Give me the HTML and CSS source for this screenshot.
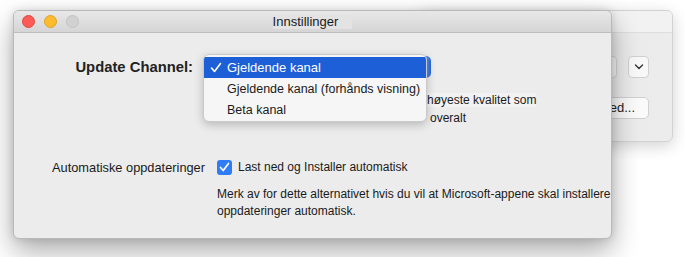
FILE: index.html
```html
<!DOCTYPE html>
<html lang="nb">

<head>
    <meta charset="UTF-8" />
    <meta name="viewport" content="width=device-width, initial-scale=1.0" />
    <title>Innstillinger</title>
    <link rel="stylesheet" href="styles.css">
</head>

<body>
    <div class="desktop">
        <!-- Window behind -->
        <div class="window back">
            <div class="back-title"></div>
            <div class="back-body">
                <div class="back-row">
                    <div class="field"></div>
                    <div class="stepper">
                        <svg width="10" height="6" viewBox="0 0 10 6">
                            <polyline points="1.5,1 5,4.5 8.5,1" fill="none" stroke="#333" stroke-width="1.4" stroke-linecap="round" stroke-linejoin="round" />
                        </svg>
                    </div>
                </div>
                <div class="back-row">
                    <div class="btn">Advanced...</div>
                </div>
            </div>
        </div>

        <!-- Settings window -->
        <div class="window front">
            <div class="titlebar">
                <div class="lights">
                    <span class="light red"></span>
                    <span class="light yellow"></span>
                    <span class="light gray"></span>
                </div>
                <div class="title"><span>Innstillinger</span></div>
                <div></div>
            </div>

            <div class="content">
                <div class="channel-row">
                    <div class="channel-label">Update Channel:</div>
                    <div class="popup">
                        <div class="menu">
                            <div class="item selected">
                                <svg class="check" width="12" height="11" viewBox="0 0 12 11">
                                    <polyline points="1.5,6 4.5,9.5 10.5,1.5" fill="none" stroke="#fff" stroke-width="1.6" stroke-linecap="round" stroke-linejoin="round" />
                                </svg>
                                Gjeldende kanal
                            </div>
                            <div class="item">Gjeldende kanal (forhånds visning)</div>
                            <div class="item">Beta kanal</div>
                        </div>
                    </div>
                </div>

                <div class="channel-note">
                    <p><span class="mark">høyeste kvalitet som</span></p>
                    <p class="shift">overalt</p>
                </div>

                <div class="auto-row">
                    <div class="auto-label">Automatiske oppdateringer</div>
                    <div class="checkbox">
                        <svg width="11" height="10" viewBox="0 0 11 10">
                            <polyline points="1.5,5.5 4.2,8.5 9.5,1.5" fill="none" stroke="#fff" stroke-width="1.7" stroke-linecap="round" stroke-linejoin="round" />
                        </svg>
                    </div>
                    <div class="auto-text">Last ned og Installer automatisk</div>
                </div>

                <p class="auto-note">Merk av for dette alternativet hvis du vil at Microsoft-appene skal installere<br>oppdateringer automatisk.</p>
            </div>
        </div>
    </div>
</body>

</html>
```

FILE: styles.css
```css
/* General Reset */
* {
    margin: 0;
    padding: 0;
    box-sizing: border-box;
}

body {
    font-family: "Liberation Sans", Arial, sans-serif;
    background: #fff;
    color: #1a1a1a;
}

.desktop {
    position: relative;
    width: 685px;
    height: 257px;
    overflow: hidden;
    background: #fff;
}

.window {
    position: absolute;
    border-radius: 6px;
    overflow: hidden;
}

/* Back window */
.back {
    left: 420px;
    top: 10px;
    width: 253px;
    height: 132px;
    background: linear-gradient(90deg, #d9d9d9, #e9e9e9 40%, #ececec);
    border: 1px solid #d2d2d2;
    box-shadow: 0 4px 16px rgba(0, 0, 0, 0.18);
}

.back-title {
    height: 22px;
    background: #f2f2f2;
    border-bottom: 1px solid #dedede;
}

.back-body {
    display: flex;
    flex-direction: column;
    align-items: flex-end;
    gap: 19px;
    padding: 23px 23px 0 0;
}

.back-row {
    display: flex;
    align-items: center;
    gap: 11px;
}

.field {
    width: 120px;
    height: 22px;
    background: #f7f7f7;
    border: 1px solid #d4d4d4;
    border-radius: 4px;
}

.stepper {
    width: 21px;
    height: 22px;
    background: #f8f8f8;
    border: 1px solid #d0d0d0;
    border-radius: 4px;
    display: flex;
    align-items: center;
    justify-content: center;
}

.btn {
    height: 22px;
    padding: 0 13px 0 14px;
    background: #fafafa;
    border: 1px solid #d0d0d0;
    border-radius: 5px;
    font-size: 13px;
    line-height: 20px;
    color: #222;
}

/* Front window */
.front {
    left: 13px;
    top: 10px;
    width: 599px;
    height: 229px;
    background: #ececec;
    border: 1px solid #b9b9b9;
    box-shadow: 0 12px 28px rgba(0, 0, 0, 0.33), 0 0 8px rgba(0, 0, 0, 0.12);
}

.titlebar {
    display: grid;
    grid-template-columns: 1fr auto 1fr;
    align-items: center;
    height: 22px;
    background: linear-gradient(#e8e8e8, #d5d5d5);
    border-bottom: 1px solid #bdbdbd;
}

.lights {
    display: flex;
    gap: 9px;
    padding-left: 8px;
}

.light {
    width: 13px;
    height: 13px;
    border-radius: 50%;
}

.red {
    background: #fd5b57;
    border: 0.5px solid #e2463f;
}

.yellow {
    background: #fdbc2e;
    border: 0.5px solid #e1a125;
}

.gray {
    background: #d1d1d1;
    border: 0.5px solid #c2c2c2;
}

.title span {
    display: block;
    font-size: 13px;
    line-height: 14px;
    padding-right: 14px;
    background: #e3e3e3;
    color: #1a1a1a;
}

.content {
    padding-top: 23px;
    white-space: nowrap;
}

.channel-row {
    display: flex;
    align-items: center;
    gap: 10px;
    height: 22px;
}

.channel-label {
    width: 179px;
    text-align: right;
    font-size: 14.8px;
    font-weight: bold;
    color: #222;
}

.popup {
    position: relative;
    width: 228px;
    height: 22px;
    background: linear-gradient(90deg, #2466d9 96%, #5b8fe6 98%, #2466d9);
    border-radius: 5px;
}

.menu {
    position: absolute;
    left: 0;
    top: -2px;
    width: 224px;
    height: 68px;
    padding-top: 2px;
    background: #f6f6f6;
    border: 1px solid #c9c9c9;
    border-radius: 6px;
    box-shadow: 0 3px 10px rgba(0, 0, 0, 0.22);
    overflow: hidden;
}

.item {
    display: flex;
    align-items: center;
    height: 21px;
    padding-left: 23px;
    font-size: 12.5px;
    color: #1a1a1a;
}

.item.selected {
    background: #1d5fd6;
    color: #fff;
    padding-left: 6px;
    font-size: 13px;
}

.check {
    margin-right: 5px;
}

.channel-note {
    margin: 13px 0 0 413px;
    font-size: 12px;
    line-height: 18px;
    color: #1a1a1a;
}

.mark {
    background: #f2f2f2;
}

.shift {
    padding-left: 3px;
}

.auto-row {
    display: flex;
    align-items: center;
    height: 18px;
    margin-top: 31px;
}

.auto-label {
    width: 191px;
    text-align: right;
    font-size: 12.8px;
    color: #1a1a1a;
}

.checkbox {
    width: 15px;
    height: 15px;
    margin: 0 6px 0 12px;
    border-radius: 3px;
    background: #2f7df6;
    display: flex;
    align-items: center;
    justify-content: center;
}

.auto-text {
    font-size: 12px;
}

.auto-note {
    margin: 10px 0 0 203px;
    font-size: 12px;
    line-height: 17px;
}
```
